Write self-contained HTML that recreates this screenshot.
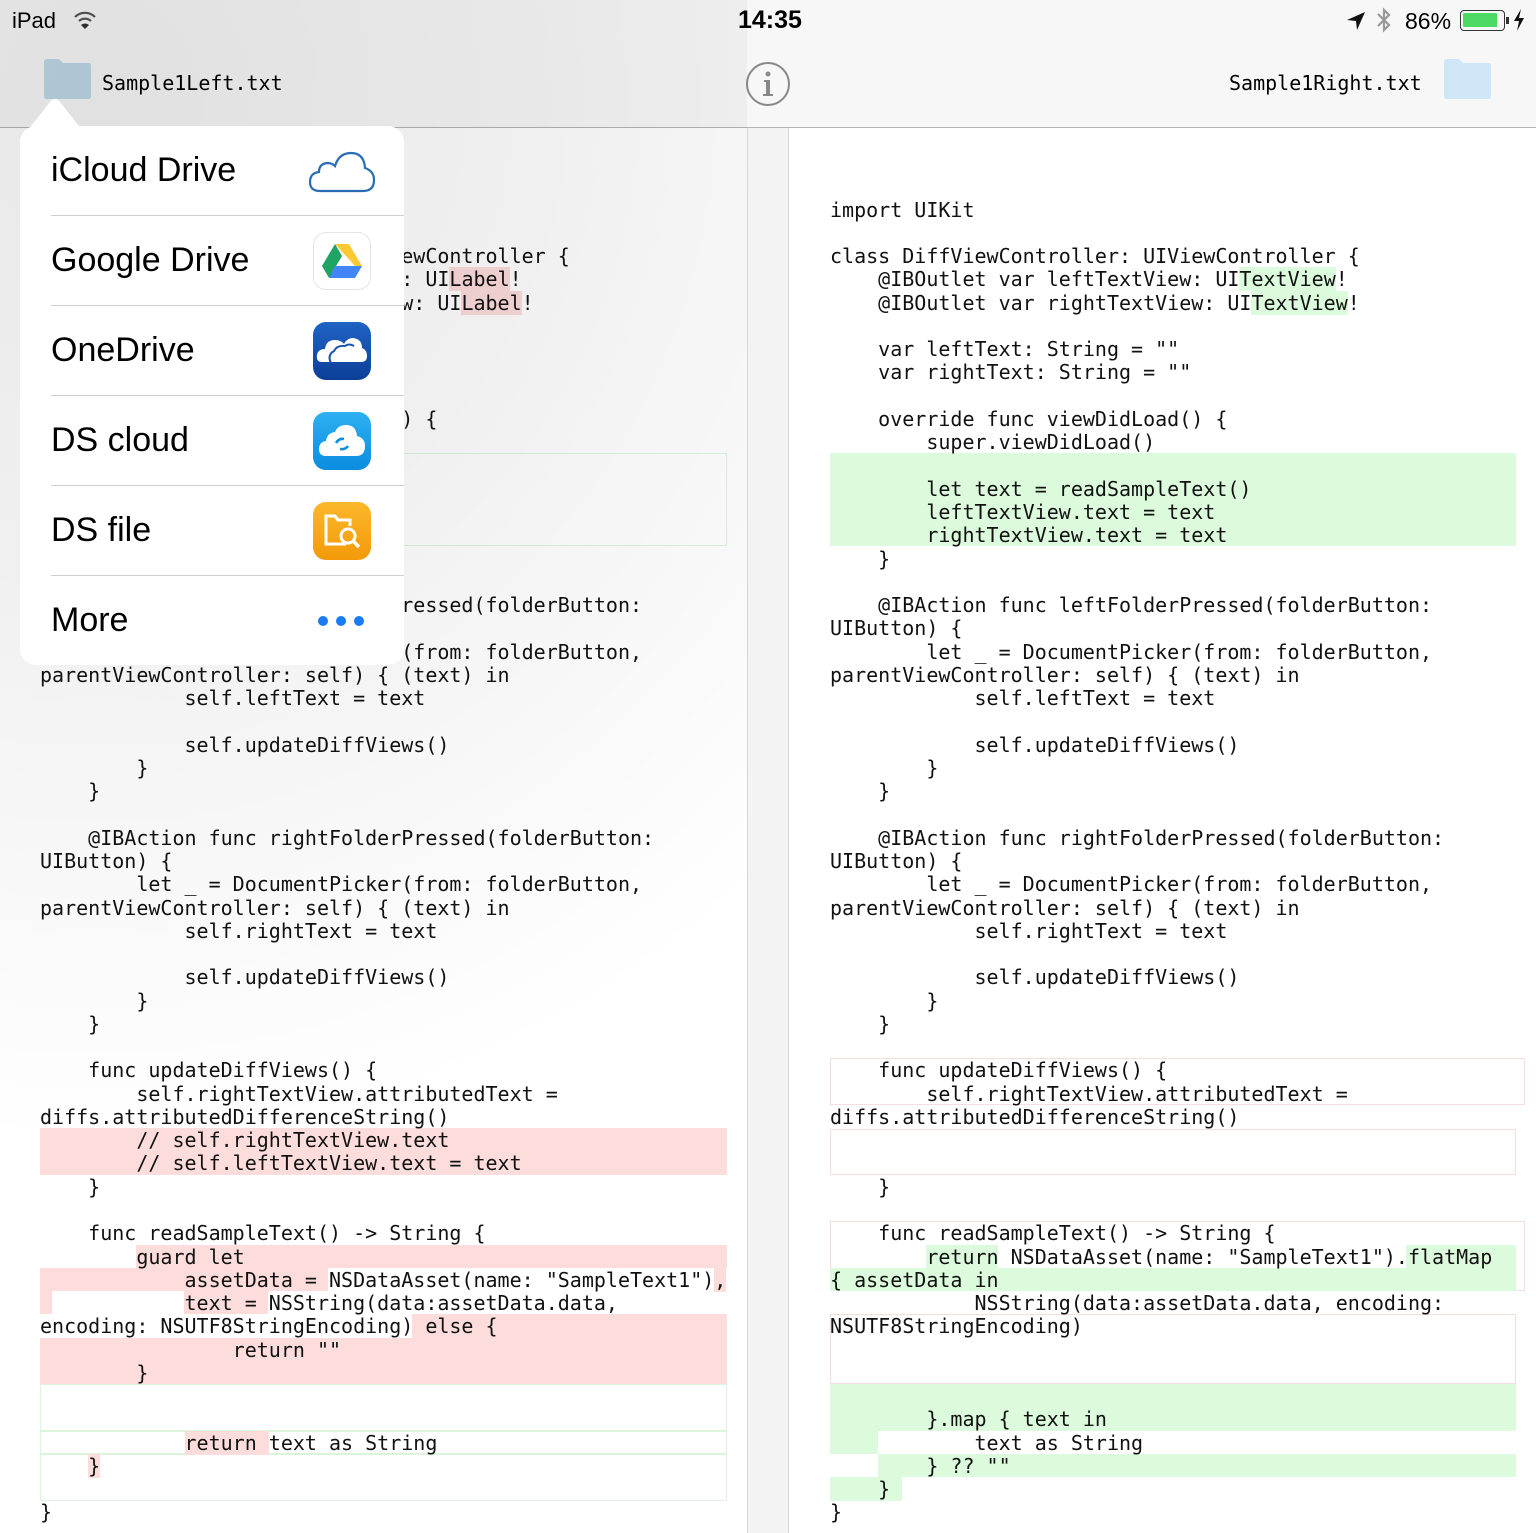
<!DOCTYPE html>
<html><head><meta charset="utf-8">
<style>
*{margin:0;padding:0;box-sizing:border-box}
body{width:1536px;height:1533px;position:relative;overflow:hidden;background:#fff;font-family:"Liberation Sans",sans-serif}
.abs{position:absolute}
pre{position:absolute;top:198.6px;font-family:"DejaVu Sans Mono","Liberation Mono",monospace;font-size:20px;line-height:23.27px;color:#111;white-space:pre;letter-spacing:0}
.g{background:#dcfbdc}
.p{background:#fddcdc}
.band{position:absolute;height:23.27px}
.gb{border:1.5px solid #dcf3dc}
.pb{border:1.5px solid #f6dede}
.row{position:absolute;left:51px;font-size:34px;color:#000;width:353px}
.sep{position:absolute;left:51px;width:353px;height:1px;background:#cfcfcf}
.ic{position:absolute;left:313px;width:58px;height:58px;border-radius:13px}
</style></head><body>
<div class="abs" style="left:0;top:0;width:1536px;height:128px;background:#f7f7f7;border-bottom:1px solid #b4b4b4"></div>
<div class="abs" style="left:747px;top:128px;width:42px;height:1405px;background:#f3f3f3;border-left:1px solid #d6d6d6;border-right:1px solid #d6d6d6"></div>

<div class="abs" style="left:12px;top:8px;font-size:22px">iPad</div>
<svg class="abs" style="left:73px;top:10px" width="24" height="20" viewBox="0 0 24 20"><path d="M2 7 A14 14 0 0 1 22 7" stroke="#555" stroke-width="2.2" fill="none"/><path d="M6 11 A9 9 0 0 1 18 11" stroke="#555" stroke-width="2.2" fill="none"/><path d="M8 15 L12 19 L16 15 A6 6 0 0 0 8 15Z" fill="#333"/></svg>
<div class="abs" style="left:738px;top:6px;font-size:25px;font-weight:bold">14:35</div>
<svg class="abs" style="left:1346px;top:11px" width="20" height="20" viewBox="0 0 20 20"><path d="M19 1 L1 9 L10 10 L11 19Z" fill="#111"/></svg>
<svg class="abs" style="left:1375px;top:6px" width="18" height="28" viewBox="0 0 18 28"><path d="M3 8 L14 19 L9 24 L9 4 L14 9 L3 20" stroke="#999" stroke-width="2.2" fill="none"/></svg>
<div class="abs" style="left:1405px;top:8px;font-size:23px">86%</div>
<div class="abs" style="left:1460px;top:10px;width:45px;height:21px;border:1.5px solid #333;border-radius:4px;padding:2px"><div style="width:34px;height:14px;background:#4cd964;border-radius:1px"></div></div>
<div class="abs" style="left:1506px;top:17px;width:3px;height:7px;background:#333"></div>
<svg class="abs" style="left:1512px;top:8px" width="14" height="24" viewBox="0 0 14 24"><path d="M9 1 L2 13 L7 13 L5 23 L12 10 L7 10Z" fill="#111"/></svg>

<svg class="abs" style="left:42px;top:58px" width="50" height="42" viewBox="0 0 50 42"><path d="M2 4 Q2 1 5 1 L17 1 L21 5 L47 5 Q49 5 49 8 L49 38 Q49 41 46 41 L4 41 Q2 41 2 38Z" fill="#bfd8e8"/></svg>
<div class="abs" style="left:102px;top:71px;font-family:'DejaVu Sans Mono',monospace;font-size:20px">Sample1Left.txt</div>
<svg class="abs" style="left:745px;top:61px" width="46" height="46" viewBox="0 0 46 46"><circle cx="23" cy="23" r="21" stroke="#888" stroke-width="2" fill="none"/><circle cx="23" cy="13" r="2.5" fill="#888"/><path d="M19 19 L25 19 L25 33 L28 33 L28 35 L18 35 L18 33 L21 33 L21 21 L19 21Z" fill="#888"/></svg>
<div class="abs" style="left:1229px;top:71px;font-family:'DejaVu Sans Mono',monospace;font-size:20px">Sample1Right.txt</div>
<svg class="abs" style="left:1442px;top:58px" width="50" height="42" viewBox="0 0 50 42"><path d="M2 4 Q2 1 5 1 L17 1 L21 5 L47 5 Q49 5 49 8 L49 38 Q49 41 46 41 L4 41 Q2 41 2 38Z" fill="#cfe6f6"/></svg>

<div class="abs gb" style="left:40px;top:453px;width:687px;height:93px"></div>
<div class="band p" style="left:40px;top:1128.2px;width:687px;height:46.6px"></div>
<div class="band p" style="left:136px;top:1244.5px;width:591px"></div>
<div class="band p" style="left:40px;top:1267.8px;width:288px"></div>
<div class="band p" style="left:40px;top:1291.1px;width:12px"></div>
<div class="band p" style="left:184px;top:1291.1px;width:84px"></div>
<div class="band p" style="left:412px;top:1314.4px;width:315px"></div>
<div class="band p" style="left:40px;top:1337.6px;width:687px;height:46.6px"></div>
<div class="abs gb" style="left:40px;top:1384px;width:687px;height:47px"></div>
<div class="abs gb" style="left:40px;top:1431px;width:687px;height:23px"></div>
<div class="abs gb" style="left:40px;top:1454px;width:687px;height:47px"></div>

<pre style="left:40px">import UIKit

class DiffViewController: UIViewController {
    @IBOutlet var leftTextView: UI<span class="p">Label</span>!
    @IBOutlet var rightTextView: UI<span class="p">Label</span>!

    var leftText: String = ""
    var rightText: String = ""

    override func viewDidLoad() {
        super.viewDidLoad()




    }

    @IBAction func leftFolderPressed(folderButton:
UIButton) {
        let _ = DocumentPicker(from: folderButton,
parentViewController: self) { (text) in
            self.leftText = text

            self.updateDiffViews()
        }
    }

    @IBAction func rightFolderPressed(folderButton:
UIButton) {
        let _ = DocumentPicker(from: folderButton,
parentViewController: self) { (text) in
            self.rightText = text

            self.updateDiffViews()
        }
    }

    func updateDiffViews() {
        self.rightTextView.attributedText =
diffs.attributedDifferenceString()
        // self.rightTextView.text
        // self.leftTextView.text = text
    }

    func readSampleText() -> String {
        guard let
            assetData = NSDataAsset(name: "SampleText1")<span class="p">,</span>
            text = NSString(data:assetData.data,
encoding: NSUTF8StringEncoding) else {
                return ""
        }


            <span class="p">return </span>text as String
    <span class="p">}</span>

}</pre>

<div class="abs" style="left:0;top:0;width:747px;height:1533px;background:radial-gradient(ellipse 1000px 1050px at 100px 100px, rgba(0,0,0,0.09) 0%, rgba(0,0,0,0.06) 45%, rgba(0,0,0,0) 100%)"></div>

<div class="band g" style="left:830px;top:453.4px;width:686px;height:93.1px"></div>
<div class="abs pb" style="left:830px;top:1058px;width:695px;height:47px"></div>
<div class="abs pb" style="left:830px;top:1129px;width:686px;height:46px"></div>
<div class="abs pb" style="left:830px;top:1221px;width:695px;height:70px"></div>
<div class="band g" style="left:926px;top:1244.5px;width:72px"></div>
<div class="band g" style="left:1406px;top:1244.5px;width:110px"></div>
<div class="band g" style="left:830px;top:1267.8px;width:686px"></div>
<div class="abs pb" style="left:830px;top:1314px;width:686px;height:70px"></div>
<div class="band g" style="left:830px;top:1384.2px;width:686px;height:46.6px"></div>
<div class="band g" style="left:830px;top:1430.7px;width:48px"></div>
<div class="band g" style="left:878px;top:1454px;width:638px"></div>
<div class="band g" style="left:830px;top:1477.3px;width:72px"></div>

<pre style="left:830px">import UIKit

class DiffViewController: UIViewController {
    @IBOutlet var leftTextView: UI<span class="g">TextView</span>!
    @IBOutlet var rightTextView: UI<span class="g">TextView</span>!

    var leftText: String = ""
    var rightText: String = ""

    override func viewDidLoad() {
        super.viewDidLoad()

        let text = readSampleText()
        leftTextView.text = text
        rightTextView.text = text
    }

    @IBAction func leftFolderPressed(folderButton:
UIButton) {
        let _ = DocumentPicker(from: folderButton,
parentViewController: self) { (text) in
            self.leftText = text

            self.updateDiffViews()
        }
    }

    @IBAction func rightFolderPressed(folderButton:
UIButton) {
        let _ = DocumentPicker(from: folderButton,
parentViewController: self) { (text) in
            self.rightText = text

            self.updateDiffViews()
        }
    }

    func updateDiffViews() {
        self.rightTextView.attributedText =
diffs.attributedDifferenceString()


    }

    func readSampleText() -> String {
        return NSDataAsset(name: "SampleText1").flatMap
{ assetData in
            NSString(data:assetData.data, encoding:
NSUTF8StringEncoding)



        }.map { text in
            text as String
        } ?? ""
    }
}</pre>

<svg class="abs" style="left:28px;top:96px" width="56" height="34" viewBox="0 0 56 34"><path d="M0 34 L22 6 Q27 0 32 6 L54 34Z" fill="#fff"/></svg>
<div class="abs" style="left:20px;top:126px;width:384px;height:539px;background:#fff;border-radius:16px"></div>
<div class="row" style="top:151px">iCloud Drive</div>
<div class="row" style="top:241px">Google Drive</div>
<div class="row" style="top:331px">OneDrive</div>
<div class="row" style="top:421px">DS cloud</div>
<div class="row" style="top:511px">DS file</div>
<div class="row" style="top:601px">More</div>
<div class="sep" style="top:215px"></div>
<div class="sep" style="top:305px"></div>
<div class="sep" style="top:395px"></div>
<div class="sep" style="top:485px"></div>
<div class="sep" style="top:575px"></div>
<svg class="abs" style="left:308px;top:150px" width="68" height="44" viewBox="0 0 68 44"><path d="M12 41 Q2 41 2 32 Q2 23 11 22 Q11 14 19 13 Q24 13 27 16 Q31 3 43 3 Q56 3 57 18 Q66 21 66 30 Q66 41 55 41Z" fill="none" stroke="#2a6db5" stroke-width="2.2"/></svg>
<div class="ic" style="top:232px;border:1px solid #e4e4e4;background:#fff"></div>
<svg class="abs" style="left:320px;top:242px" width="44" height="38" viewBox="0 0 44 38"><path d="M15 2 L29 2 L42 24 L35 24Z" fill="#fcc934"/><path d="M15 2 L22 14 L9 36 L2 24Z" fill="#1fa463"/><path d="M15 24 L42 24 L35 36 L9 36Z" fill="#4285f4"/></svg>
<div class="ic" style="top:322px;background:linear-gradient(#1f63c4,#0c3f98)"></div>
<svg class="abs" style="left:316px;top:334px" width="52" height="34" viewBox="0 0 52 34"><path d="M6 28 Q0 28 1 21 Q2 15 9 15 Q10 6 19 6 Q25 6 28 10 Q31 4 37 4 Q46 5 46 14 Q51 16 51 22 Q51 28 45 28Z" fill="#fff"/><path d="M15 29 Q11 21 18 17 Q21 11 29 12 Q33 9 38 12" fill="none" stroke="#1a55b0" stroke-width="2"/></svg>
<div class="ic" style="top:412px;background:linear-gradient(#2eb0f2,#0a8de0)"></div>
<svg class="abs" style="left:318px;top:424px" width="48" height="36" viewBox="0 0 48 36"><path d="M8 32 Q1 32 1 25 Q1 18 8 17 Q9 9 17 8 Q20 1 28 1 Q38 1 39 12 Q47 14 47 22 Q47 32 38 32Z" fill="#fff"/><path d="M18 19 Q21 14 26 15 M30 22 Q27 26 22 25" stroke="#0a8de0" stroke-width="2.6" fill="none"/></svg>
<div class="ic" style="top:502px;background:linear-gradient(#fbb82a,#f39a0a)"></div>
<svg class="abs" style="left:322px;top:512px" width="42" height="40" viewBox="0 0 42 40"><path d="M24 32 L4 32 L4 4 L13 4 L16 8 L28 8 L28 14" fill="none" stroke="#fff" stroke-width="3"/><circle cx="26" cy="24" r="7" fill="none" stroke="#fff" stroke-width="3"/><path d="M31 29 L37 35" stroke="#fff" stroke-width="3.5"/></svg>
<div class="abs" style="left:318px;top:616px;width:10px;height:10px;border-radius:50%;background:#1a7bf5"></div>
<div class="abs" style="left:336px;top:616px;width:10px;height:10px;border-radius:50%;background:#1a7bf5"></div>
<div class="abs" style="left:354px;top:616px;width:10px;height:10px;border-radius:50%;background:#1a7bf5"></div>
</body></html>
